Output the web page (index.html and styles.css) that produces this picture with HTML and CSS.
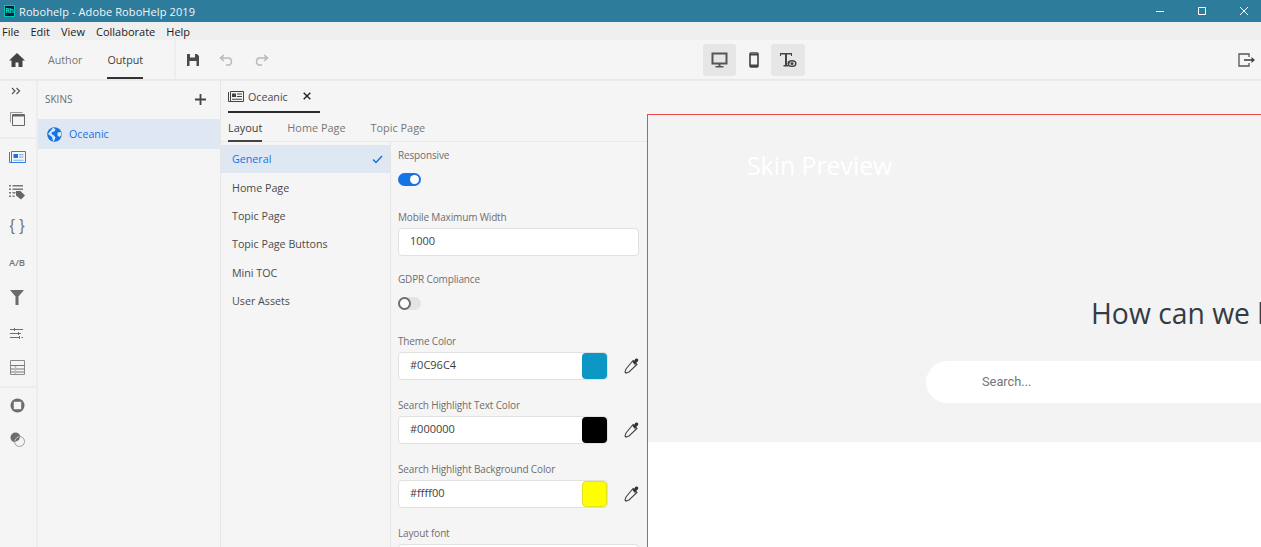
FILE: index.html
```html
<!DOCTYPE html>
<html lang="en">
<head>
<meta charset="utf-8">
<title>Robohelp - Adobe RoboHelp 2019</title>
<link rel="stylesheet" href="styles.css">
</head>
<body>
<div class="app">
  <header class="titlebar">
    <div class="title-left">
      <span class="logo">Rh</span>
      <span class="title-text">Robohelp - Adobe RoboHelp 2019</span>
    </div>
    <div class="winctl">
      <svg width="10" height="10" viewBox="0 0 10 10"><path d="M1 5.500h8" stroke="#fff" fill="none"/></svg>
      <svg width="10" height="10" viewBox="0 0 10 10"><path d="M1.500 1.500h7v7h-7z" stroke="#fff" fill="none"/></svg>
      <svg width="10" height="10" viewBox="0 0 10 10"><path d="M1 1l8 8M9 1l-8 8" stroke="#fff" fill="none"/></svg>
    </div>
  </header>
  <nav class="menubar">
    <span>File</span><span>Edit</span><span>View</span><span>Collaborate</span><span>Help</span>
  </nav>
  <div class="toolbar">
    <div class="tb-left">
      <svg class="home" width="18" height="16" viewBox="0 0 18 16"><path d="M9 1L1 8.500h2.500V15h4v-4.500h3V15h4V8.500H17z" fill="#444"/></svg>
      <span class="tb-tab">Author</span>
      <span class="tb-tab tb-active">Output</span>
    </div>
    <div class="tb-actions">
      <svg width="14" height="14" viewBox="0 0 14 14"><path d="M1 1h10l2 2v10H1z" fill="#4b4b4b"/><path d="M4 1h5v3.500H4z" fill="#f5f5f5"/><path d="M3.500 8h7v5h-7z" fill="#f5f5f5"/></svg>
      <svg width="16" height="12" viewBox="0 0 16 12"><path d="M5 1L1.500 4 5 7M2 4h8.500a4 4 0 0 1 0 7H7" fill="none" stroke="#b9b9b9" stroke-width="1.500"/></svg>
      <svg width="16" height="12" viewBox="0 0 16 12"><path d="M11 1l3.500 3L11 7M14 4H5.500a4 4 0 0 0 0 7H9" fill="none" stroke="#b9b9b9" stroke-width="1.500"/></svg>
    </div>
    <div class="tb-center">
      <span class="dev dev-on dev-desktop"><svg width="17" height="16" viewBox="0 0 17 16"><path d="M1.500 1.500h14v10h-14z" fill="none" stroke="#555" stroke-width="2"/><path d="M7.500 12h2v2h-2zM4.500 14h8v1.500h-8z" fill="#555"/></svg></span>
      <span class="dev dev-phone"><svg width="10" height="16" viewBox="0 0 10 16"><rect x="1" y="1" width="8" height="14" rx="1" fill="none" stroke="#444" stroke-width="1.600"/><path d="M1 2h8v1.500H1zM1 12.500h8V15H1z" fill="#444"/></svg></span>
      <span class="dev dev-on"><svg width="18" height="16" viewBox="0 0 18 16"><path d="M1 1h12v3h-1V2.500H8V13h1.500v1.500h-5V13H6V2.500H2V4H1z" fill="#444"/><ellipse cx="13" cy="11.500" rx="3.800" ry="2.800" fill="none" stroke="#444" stroke-width="1.500"/><circle cx="13" cy="11.500" r="1.500" fill="#444"/><path d="M9 9.500h2v2H9z" fill="#444"/></svg></span>
    </div>
    <svg class="export" width="18" height="14" viewBox="0 0 18 14"><path d="M11 4V1H1v12h10v-3" fill="none" stroke="#555" stroke-width="1.300"/><path d="M6 7h9" stroke="#444" stroke-width="1.600"/><path d="M13.500 4l3.500 3-3.500 3z" fill="#444"/></svg>
  </div>
  <div class="workspace">
    <aside class="rail">
      <div class="rail-top">
        <span class="rail-btn rail-expand"><svg width="10" height="8" viewBox="0 0 10 8"><path d="M1 1l3 3-3 3M5.500 1l3 3-3 3" fill="none" stroke="#555" stroke-width="1.200"/></svg></span>
        <span class="rail-btn"><svg width="15" height="14" viewBox="0 0 15 14"><path d="M.500 10.500V.500h12" fill="none" stroke="#999"/><path d="M2.500 2.500h12v11h-12z" fill="none" stroke="#666"/><path d="M2.500 3h12v1.500h-12z" fill="#666"/></svg></span>
      </div>
      <div class="rail-mid">
        <span class="rail-btn"><svg width="17" height="12" viewBox="0 0 17 12"><path d="M.500 1v10.500h16V.500h-14v11" fill="none" stroke="#2f7ee6"/><path d="M4.500 3H9v4H4.500z" fill="#1473e6"/><path d="M10 3h4.500v1.200H10zM10 5.500h4.500v1.200H10zM4.500 8.700h10v1H4.500z" fill="#7fb0ee"/></svg></span>
        <span class="rail-btn"><svg width="16" height="16" viewBox="0 0 16 16"><path d="M0 1h2v1.500H0zM3.500 1H14v1.500H3.500zM0 4.500h2V6H0zM3.500 4.500H14V6H3.500zM0 8h2v1.500H0zM3.500 8h3v1.500h-3zM0 11.500h2V13H0zM3.500 11.500h2V13h-2z" fill="#777"/><path d="M7 7h4.500l4.500 4.500-4 4L7 11.500z" fill="#666"/></svg></span>
        <span class="rail-btn rail-text rail-brace">{ }</span>
        <span class="rail-btn rail-text rail-ab">A/B</span>
        <span class="rail-btn"><svg width="14" height="15" viewBox="0 0 14 15"><path d="M0 0h14L8.500 6.500V15h-3V6.500z" fill="#6b6b6b"/></svg></span>
        <span class="rail-btn"><svg width="15" height="12" viewBox="0 0 15 12"><path d="M0 2h4V1h1v1h8v1H5v1H4V3H0zM0 6h8V5h1v1h2v1H9v1H8V7H0zM0 10h9V9h1v3H9v-1H0zM11.500 10H13v1h-1.500z" fill="#6d6d6d"/></svg></span>
        <span class="rail-btn"><svg width="15" height="15" viewBox="0 0 15 15"><path d="M.500.500h14v14H.500z" fill="none" stroke="#8a8a8a"/><path d="M.500 5.500h14M.500 9h14M.500 12h14" stroke="#777"/><path d="M5.500 6v8" stroke="#bbb" stroke-width="1.500"/></svg></span>
      </div>
      <div class="rail-bottom">
        <span class="rail-btn"><svg width="15" height="15" viewBox="0 0 15 15"><circle cx="7.500" cy="7.500" r="7" fill="#6d6d6d"/><rect x="3.800" y="3.800" width="7.400" height="7.400" fill="#f5f5f5"/></svg></span>
        <span class="rail-btn"><svg width="15" height="15" viewBox="0 0 15 15"><circle cx="5.500" cy="5.500" r="5" fill="#6d6d6d"/><circle cx="9.500" cy="9.500" r="5" fill="#f5f5f5" stroke="#888" stroke-width=".8"/><path d="M5 10a5 5 0 0 1 5-5l-1 3z" fill="#6d6d6d"/></svg></span>
      </div>
    </aside>
    <section class="skins">
      <div class="skins-head">
        <span>SKINS</span>
        <svg width="11" height="11" viewBox="0 0 11 11"><path d="M5.500 0v11M0 5.500h11" stroke="#444" stroke-width="1.800"/></svg>
      </div>
      <div class="skin-row">
        <svg width="15" height="15" viewBox="0 0 15 15"><circle cx="7.500" cy="7.500" r="7.300" fill="#1473e6"/><path d="M6 .800l2.500 1.500-1 2.200-2.500.5-.5 2 2.500 1.500 1.500 2-1.500 3.500h-1l-1-4-2-1.500L1 7zM10.500 5.500l3.500-.5.500 3-2 2-2-1.500z" fill="#e0e7f2"/></svg>
        <span>Oceanic</span>
      </div>
    </section>
    <main class="main">
      <div class="settings">
        <div class="doc-tabs">
          <div class="doc-tab">
            <svg width="16" height="11" viewBox="0 0 16 11"><path d="M.500 1v9.500h15V.500H2.500v10" fill="none" stroke="#444"/><path d="M4 2.500h4v3.500H4z" fill="#444"/><path d="M9 2.500h5v1H9zM9 5h5v1H9zM4 7.800h10v1H4z" fill="#444"/></svg>
            <span class="doc-name">Oceanic</span>
            <svg class="doc-close" width="8" height="8" viewBox="0 0 8 8"><path d="M.700.700l6.600 6.600M7.300.700L.700 7.300" stroke="#222" stroke-width="1.400"/></svg>
          </div>
        </div>
        <div class="sub-tabs">
          <span class="sub-tab sub-active">Layout</span>
          <span class="sub-tab">Home Page</span>
          <span class="sub-tab">Topic Page</span>
        </div>
        <div class="panes">
          <ul class="pane-nav">
            <li class="nav-on">General<svg width="11" height="9" viewBox="0 0 11 9"><path d="M1 4.500l3 3L10 1" fill="none" stroke="#1473e6" stroke-width="1.500"/></svg></li>
            <li>Home Page</li>
            <li>Topic Page</li>
            <li>Topic Page Buttons</li>
            <li>Mini TOC</li>
            <li>User Assets</li>
          </ul>
          <form class="form">
            <div class="field">
              <label>Responsive</label>
              <span class="toggle toggle-on"></span>
            </div>
            <div class="field">
              <label>Mobile Maximum Width</label>
              <div class="input">1000</div>
            </div>
            <div class="field">
              <label>GDPR Compliance</label>
              <span class="toggle"></span>
            </div>
            <div class="field field-color">
              <label>Theme Color</label>
              <div class="color-row">
                <div class="input input-color">#0C96C4<span class="swatch swatch-theme"></span></div>
                <svg class="picker" width="15" height="16" viewBox="0 0 15 16"><path d="M9 2.500l4 4L5 14l-3 1-1-1 1-3z" fill="#f5f5f5" stroke="#444" stroke-width="1.100"/><path d="M8 3.500l1.800-.2L11.500.800c.800-.6 1.800-.4 2.400.3.600.7.500 1.600 0 2.200l-2.400 2.400-.2 1.800z" fill="#333"/></svg>
              </div>
            </div>
            <div class="field field-color">
              <label>Search Highlight Text Color</label>
              <div class="color-row">
                <div class="input input-color">#000000<span class="swatch swatch-black"></span></div>
                <svg class="picker" width="15" height="16" viewBox="0 0 15 16"><path d="M9 2.500l4 4L5 14l-3 1-1-1 1-3z" fill="#f5f5f5" stroke="#444" stroke-width="1.100"/><path d="M8 3.500l1.800-.2L11.500.800c.800-.6 1.800-.4 2.400.3.600.7.500 1.600 0 2.200l-2.400 2.400-.2 1.800z" fill="#333"/></svg>
              </div>
            </div>
            <div class="field field-color">
              <label>Search Highlight Background Color</label>
              <div class="color-row">
                <div class="input input-color">#ffff00<span class="swatch swatch-yellow"></span></div>
                <svg class="picker" width="15" height="16" viewBox="0 0 15 16"><path d="M9 2.500l4 4L5 14l-3 1-1-1 1-3z" fill="#f5f5f5" stroke="#444" stroke-width="1.100"/><path d="M8 3.500l1.800-.2L11.500.800c.800-.6 1.800-.4 2.400.3.600.7.500 1.600 0 2.200l-2.400 2.400-.2 1.800z" fill="#333"/></svg>
              </div>
            </div>
            <div class="field">
              <label>Layout font</label>
              <div class="input"></div>
            </div>
          </form>
        </div>
      </div>
      <div class="preview">
        <div class="hero">
          <div class="hero-logo">Skin Preview</div>
          <h1 class="hero-title">How can we help you?</h1>
          <div class="hero-search">Search...</div>
        </div>
      </div>
    </main>
  </div>
</div>
</body>
</html>
```
FILE: styles.css
```css
* { box-sizing: border-box; }
html, body { margin: 0; height: 100%; overflow: hidden; }
body { font-family: "Open Sans", "Noto Sans", sans-serif; font-size: 10.700px; color: #4b4b4b; background: #f5f5f5; }
.app { width: 1261px; height: 547px; display: flex; flex-direction: column; overflow: hidden; }

.titlebar { height: 22px; background: #2e7c9c; display: flex; align-items: center; justify-content: space-between; flex: none; }
.title-left { display: flex; align-items: center; padding-left: 4px; }
.logo { width: 11px; height: 12px; background: #001e36; border: 1px solid #00c8b4; color: #00e0c8; font-size: 7px; line-height: 10px; text-align: center; letter-spacing: -.5px; font-weight: 700; }
.title-text { margin-left: 4px; color: #f2f7f9; font-size: 11px; letter-spacing: .1px; }
.winctl { display: flex; gap: 32px; padding-right: 12px; }

.menubar { height: 18px; background: #efefef; display: flex; align-items: center; flex: none; padding-left: 2px; gap: 11px; color: #222; font-size: 11px; }

.toolbar { height: 40px; background: #f5f5f5; display: flex; align-items: stretch; position: relative; flex: none; border-bottom: 1px solid #e8e8e8; }
.tb-left { width: 176px; display: flex; align-items: center; padding-left: 8px; border-right: 2px solid #ededed; }
.home { flex: none; margin-right: 22px; }
.tb-tab { height: 39px; display: flex; align-items: center; margin-right: 25px; color: #757575; border-bottom: 2px solid transparent; padding-top: 2px; }
.tb-active { color: #3e3e3e; border-bottom-color: #333; }
.tb-actions { display: flex; align-items: center; gap: 18.500px; padding-left: 10px; }
.tb-center { position: absolute; left: 703px; top: 4px; display: flex; gap: 0; }
.dev { width: 34px; height: 32px; display: flex; align-items: center; justify-content: center; border-radius: 3px; }
.dev-on { background: #e6e6e6; }
.dev-desktop { width: 33px; }
.dev-phone { width: 35px; }
.export { position: absolute; right: 5px; top: 13px; }

.workspace { flex: 1; display: flex; min-height: 0; border-top: 1px solid #ebebeb; }

.rail { width: 38px; flex: none; border-right: 2px solid #ededed; display: flex; flex-direction: column; }
.rail-btn { height: 35.100px; padding-right: 2px; display: flex; align-items: center; justify-content: center; }
.rail-top { height: 58px; border-bottom: 2px solid #ededed; }
.rail-expand { height: 20px; padding-right: 5px; }
.rail-top .rail-btn:nth-child(2) { height: 35px; }
.rail-mid { border-bottom: 2px solid #ededed; height: 249px; padding-top: .500px; }
.rail-bottom .rail-btn { height: 34px; }
.rail-text { color: #757575; }
.rail-brace { font-family: "Liberation Sans", sans-serif; font-size: 16px; padding-bottom: 2px; }
.rail-ab { font-size: 9.500px; font-weight: 600; }

.skins { width: 183px; flex: none; border-right: 1px solid #e6e6e6; }
.skins-head { height: 38px; display: flex; align-items: center; justify-content: space-between; padding: 0 14px 2px 7px; color: #6b6b6b; font-size: 10px; }
.skin-row { height: 30px; background: #dfe7f2; display: flex; align-items: center; gap: 7px; padding-left: 9px; color: #1473e6; }

.main { flex: 1; display: flex; min-width: 0; }
.settings { width: 426px; flex: none; display: flex; flex-direction: column; }
.doc-tabs { height: 32px; flex: none; display: flex; align-items: stretch; padding-left: 7px; }
.doc-tab { width: 92px; display: flex; align-items: center; border-bottom: 2px solid #2c2c2c; color: #4a4a4a; }
.doc-name { margin-left: 4px; padding-top: 1px; }
.doc-close { margin-left: 15px; }
.sub-tabs { height: 29px; flex: none; display: flex; gap: 25px; padding-left: 7px; border-bottom: 1px solid #e8e8e8; font-size: 10.900px; }
.sub-tab { display: flex; align-items: center; color: #757575; height: 29px; border-bottom: 2px solid transparent; padding-top: 1px; }
.sub-active { color: #3e3e3e; border-bottom-color: #444; }

.panes { flex: 1; display: flex; min-height: 0; }
.pane-nav { list-style: none; margin: 0; padding: 3px 0 0; width: 170px; flex: none; border-right: 1px solid #e6e6e6; }
.pane-nav li { height: 28.400px; display: flex; align-items: center; justify-content: space-between; padding: 0 7px 0 11px; color: #4b4b4b; }
.pane-nav .nav-on { background: #dfe7f2; color: #1473e6; }

.form { flex: 1; min-width: 0; padding: 5px 8px 0 7px; display: flex; flex-direction: column; gap: 16px; overflow: hidden; }
.field { display: flex; flex-direction: column; flex: none; height: 46px; }
.field-color { height: 48px; }
.field label { height: 16px; line-height: 16px; font-size: 10px; letter-spacing: -.15px; color: #6e6e6e; margin-bottom: 3px; flex: none; }
.field .toggle { margin-top: 7px; flex: none; }
.toggle { position: relative; display: block; width: 23px; height: 13px; border-radius: 7px; background: #e4e4e4; }
.toggle::after { content: ""; position: absolute; box-sizing: border-box; left: 0; top: 0; width: 13px; height: 13px; border-radius: 50%; background: #fff; border: 2px solid #6e6e6e; }
.toggle-on { background: #1473e6; }
.toggle-on::after { left: 12px; top: 2px; width: 9px; height: 9px; border: 0; }
.input { height: 28px; width: 241px; flex: none; background: #fff; border: 1px solid #e1e1e1; border-radius: 4px; display: flex; align-items: center; justify-content: space-between; padding: 0 0 4px 11px; color: #3e3e3e; font-size: 11px; }
.color-row { display: flex; align-items: center; gap: 16px; }
.input-color { width: 210px; }
.swatch { width: 25px; height: 26px; border-radius: 4px; margin-bottom: -4px; }
.swatch-theme { background: #0c96c4; }
.swatch-black { background: #000; }
.swatch-yellow { background: #ff0; border: 1px solid #e3e31a; }
.picker { flex: none; }

.preview { flex: 1; min-width: 0; height: 433px; margin-top: 33px; border-top: 1px solid #f0494a; border-left: 1px solid #f0494a; background: #fff; overflow: hidden; }
.hero { position: relative; height: 327px; width: 1200px; background: #f3f3f3; }
.hero-logo { position: absolute; left: 99px; top: 32px; color: #fff; font-size: 24.800px; line-height: 36px; }
.hero-title { position: absolute; left: 443px; top: 177px; margin: 0; font-size: 28.300px; line-height: 42px; font-weight: 400; color: #333c44; white-space: nowrap; }
.hero-search { position: absolute; left: 278px; top: 246px; width: 900px; height: 42px; border-radius: 21px; background: #fff; font-family: Roboto, sans-serif; font-size: 12.800px; line-height: 42px; color: #757575; padding-left: 56px; }
```
